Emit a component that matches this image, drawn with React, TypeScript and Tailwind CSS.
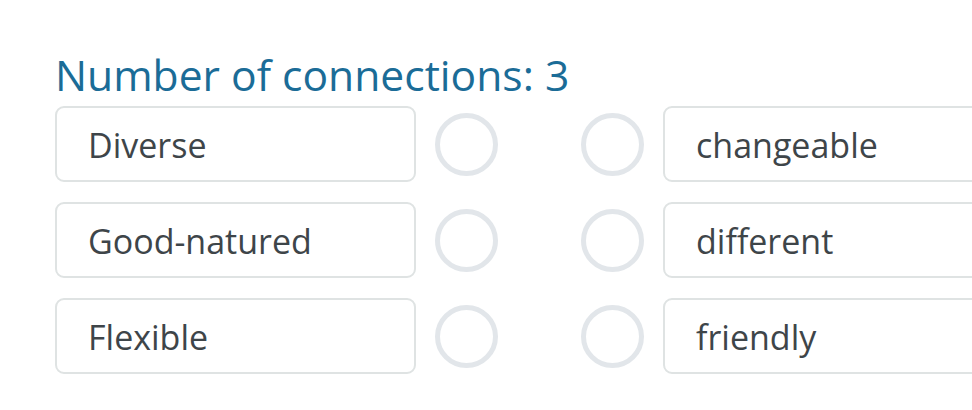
const left = ["Diverse", "Good-natured", "Flexible"];
const right = ["changeable", "different", "friendly"];

function Circle() {
  return <div className="w-[63px] h-[63px] rounded-full border-[5px] border-[#e2e6ea] shrink-0" />;
}

function Box({ text }: { text: string }) {
  return (
    <div className="h-[76px] border-2 border-[#dfe3e3] rounded-[9px] flex items-center pl-[31px] pt-[2px] text-[34px] text-[#3e4549]">
      {text}
    </div>
  );
}

export default function App() {
  return (
    <div
      className="w-[972px] h-[410px] bg-white overflow-hidden pl-[55px] pt-[46px]"
      style={{ fontFamily: '"Open Sans", sans-serif' }}
    >
      <h2 className="text-[42.6px] leading-[56px] text-[#1b6c97] mb-[4px]">Number of connections: 3</h2>
      <div className="flex flex-col gap-[20px]">
        {left.map((l, i) => (
          <div key={l} className="grid grid-cols-[361px_63px_63px_420px] gap-x-[19px] items-center">
            <Box text={l} />
            <Circle />
            <div className="ml-[64px]">
              <Circle />
            </div>
            <div className="ml-[64px]">
              <Box text={right[i]} />
            </div>
          </div>
        ))}
      </div>
    </div>
  );
}
